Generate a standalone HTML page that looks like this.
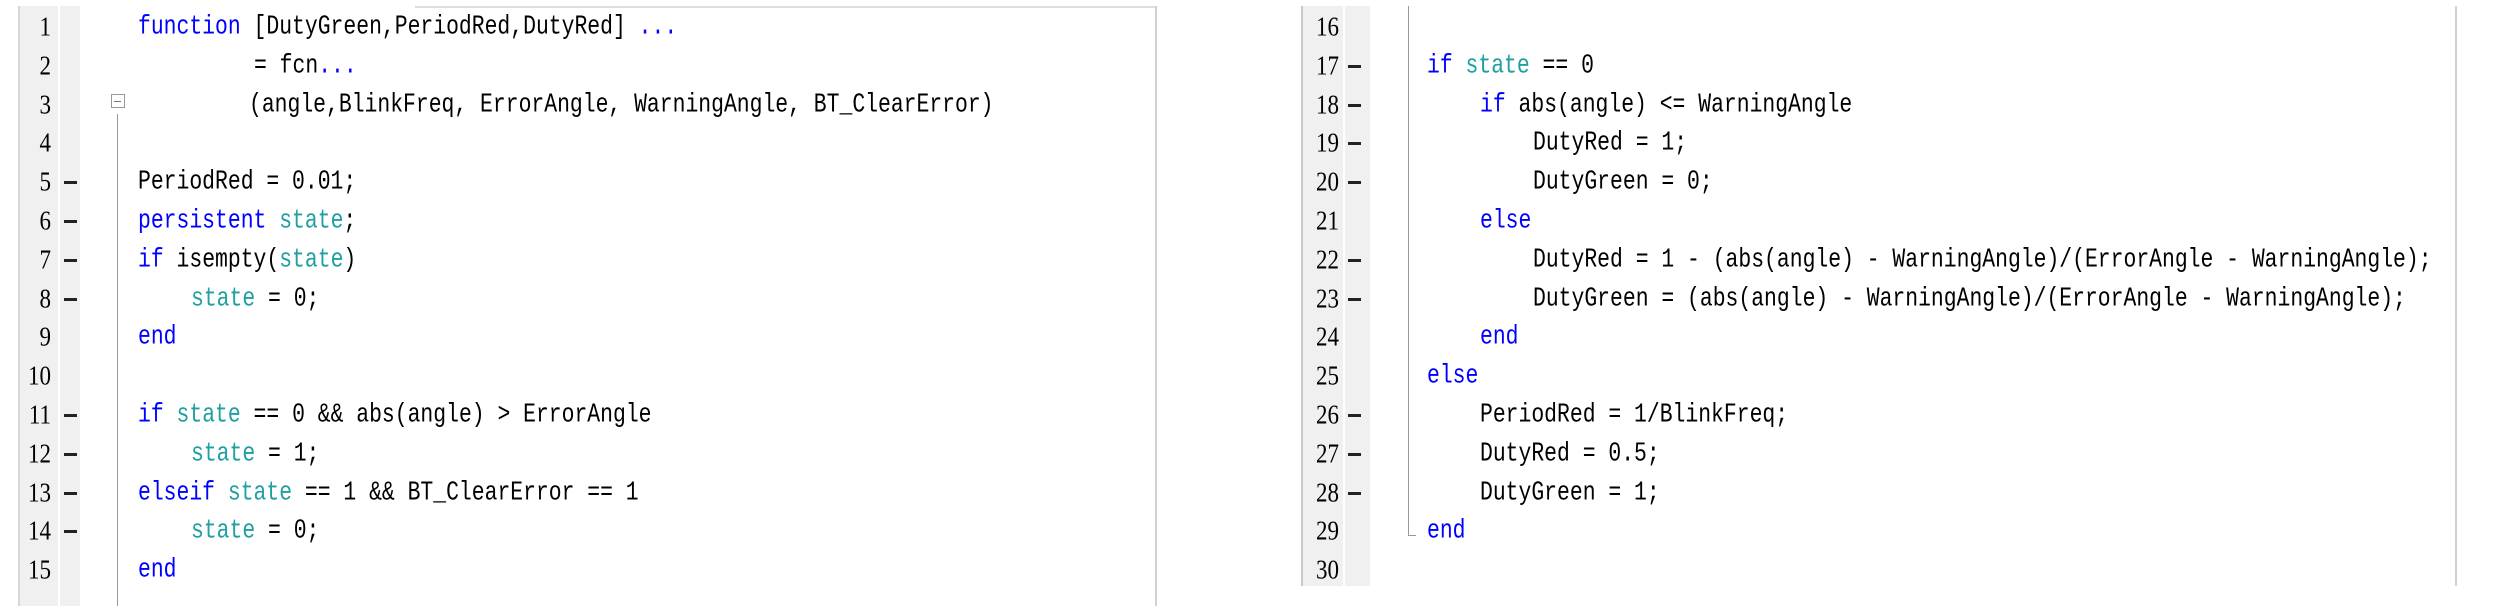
<!DOCTYPE html>
<html><head><meta charset="utf-8"><style>
html,body{margin:0;padding:0;background:#fff;width:2506px;height:606px;overflow:hidden;position:relative}
.a{position:absolute}
.ln{position:absolute;width:40px;text-align:right;font-family:"Liberation Sans Narrow","Liberation Serif",serif;font-size:23px;color:#000;transform:scaleY(1.2);transform-origin:left center;line-height:38px;height:38px;white-space:pre}
.c{position:absolute;font-family:"Liberation Mono",monospace;font-size:21.4px;color:#000;transform:scaleY(1.25);transform-origin:left center;line-height:38px;height:38px;white-space:pre}
.k{color:#0000ff}.s{color:#20a0a0}
.d{position:absolute;width:13px;height:3px;background:#222}
</style></head><body>
<div class="a" style="left:415px;top:6px;width:741px;height:2px;background:#ddd"></div>
<div class="a" style="left:18px;top:6px;width:2px;height:600px;background:#d8d8d8"></div>
<div class="a" style="left:20px;top:6px;width:38px;height:600px;background:#f0f0f0"></div>
<div class="a" style="left:58px;top:6px;width:2px;height:600px;background:#fff"></div>
<div class="a" style="left:60px;top:6px;width:20px;height:600px;background:#f0f0f0"></div>
<div class="a" style="left:1155px;top:6px;width:2px;height:600px;background:#d0d0d0"></div>
<div class="a" style="left:117px;top:114px;width:1px;height:492px;background:#999"></div>
<div class="a" style="left:111px;top:94px;width:12px;height:12px;border:1px solid #999;background:#fff"></div>
<div class="a" style="left:114px;top:101px;width:7px;height:1px;background:#777"></div>

<div id="L"></div>
<div class="a" style="left:1301px;top:6px;width:2px;height:580px;background:#c8c8c8"></div>
<div class="a" style="left:1303px;top:6px;width:40px;height:580px;background:#f0f0f0"></div>
<div class="a" style="left:1343px;top:6px;width:2px;height:580px;background:#fff"></div>
<div class="a" style="left:1345px;top:6px;width:25px;height:580px;background:#f0f0f0"></div>
<div class="a" style="left:2455px;top:6px;width:2px;height:580px;background:#d0d0d0"></div>
<div class="a" style="left:1408px;top:6px;width:1px;height:530px;background:#999"></div>
<div class="a" style="left:1408px;top:535px;width:8px;height:1px;background:#999"></div>
<div id="R"></div>
<script>
function build(id,start,numR,dashX,codeX,rows){
 var h='';
 rows.forEach(function(r,i){
  var y=8+i*38.8;
  h+='<div class="ln" style="left:'+(numR-40)+'px;top:'+y+'px">'+(start+i)+'</div>';
  if(r[0])h+='<div class="d" style="left:'+dashX+'px;top:'+(y+18)+'px"></div>';
  h+='<div class="c" style="left:'+(codeX+r[1])+'px;top:'+y+'px">'+r[2]+'</div>';
 });
 document.getElementById(id).outerHTML=h;
}
var K=function(t){return '<span class="k">'+t+'</span>'},S=function(t){return '<span class="s">'+t+'</span>'};
build('L',1,51,64,138,[
 [0,0,K('function')+' [DutyGreen,PeriodRed,DutyRed] '+K('...')],
 [0,116,'= fcn'+K('...')],
 [0,111,'(angle,BlinkFreq, ErrorAngle, WarningAngle, BT_ClearError)'],
 [0,0,''],
 [1,0,'PeriodRed = 0.01;'],
 [1,0,K('persistent')+' '+S('state')+';'],
 [1,0,K('if')+' isempty('+S('state')+')'],
 [1,53,S('state')+' = 0;'],
 [0,0,K('end')],
 [0,0,''],
 [1,0,K('if')+' '+S('state')+' == 0 &amp;&amp; abs(angle) &gt; ErrorAngle'],
 [1,53,S('state')+' = 1;'],
 [1,0,K('elseif')+' '+S('state')+' == 1 &amp;&amp; BT_ClearError == 1'],
 [1,53,S('state')+' = 0;'],
 [0,0,K('end')]
]);
build('R',16,1339,1348,1427,[
 [0,0,''],
 [1,0,K('if')+' '+S('state')+' == 0'],
 [1,53,K('if')+' abs(angle) &lt;= WarningAngle'],
 [1,106,'DutyRed = 1;'],
 [1,106,'DutyGreen = 0;'],
 [0,53,K('else')],
 [1,106,'DutyRed = 1 - (abs(angle) - WarningAngle)/(ErrorAngle - WarningAngle);'],
 [1,106,'DutyGreen = (abs(angle) - WarningAngle)/(ErrorAngle - WarningAngle);'],
 [0,53,K('end')],
 [0,0,K('else')],
 [1,53,'PeriodRed = 1/BlinkFreq;'],
 [1,53,'DutyRed = 0.5;'],
 [1,53,'DutyGreen = 1;'],
 [0,0,K('end')],
 [0,0,'']
]);
</script>
</body></html>
